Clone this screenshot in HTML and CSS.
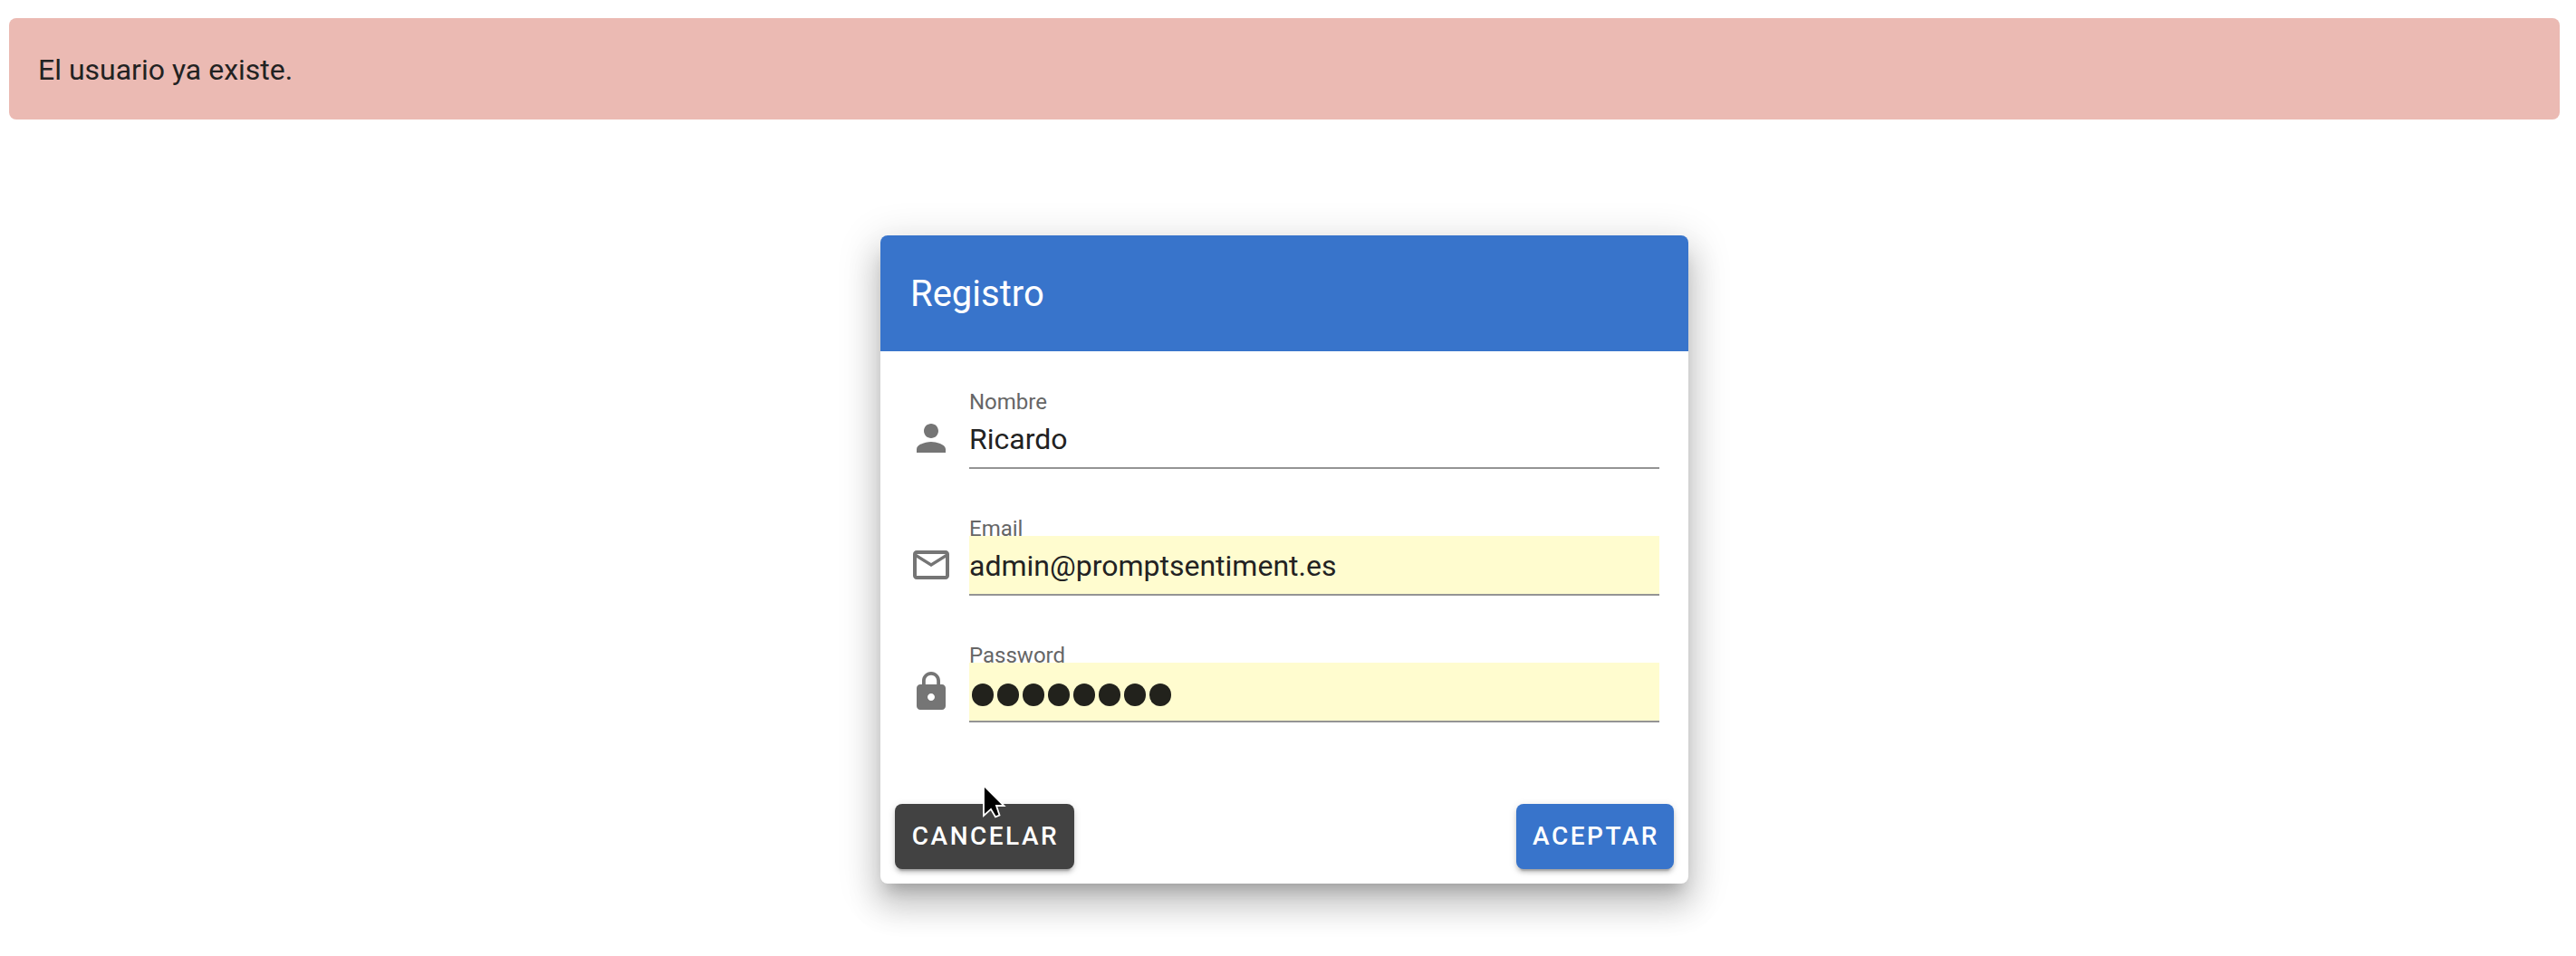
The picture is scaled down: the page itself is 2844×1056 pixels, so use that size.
FILE: index.html
```html
<!DOCTYPE html>
<html lang="es">
<head>
<meta charset="utf-8">
<title>Registro</title>
<link rel="stylesheet" href="styles.css">
</head>
<body>
<main class="page">
  <div class="alert" role="alert">El usuario ya existe.</div>
  <form class="card">
    <header class="toolbar">Registro</header>
    <div class="fields">
      <div class="field">
        <svg class="icon" viewBox="0 0 24 24"><path d="M12 12c2.21 0 4-1.79 4-4s-1.79-4-4-4-4 1.79-4 4 1.790 4 4 4zm0 2c-2.670 0-8 1.340-8 4v2h16v-2c0-2.660-5.330-4-8-4z"/></svg>
        <div class="control">
          <label class="label" for="name">Nombre</label>
          <input class="input" id="name" type="text" value="Ricardo">
        </div>
      </div>
      <div class="field">
        <svg class="icon" viewBox="0 0 24 24"><path d="M20 4H4c-1.100 0-2 .9-2 2v12c0 1.100.9 2 2 2h16c1.100 0 2-.9 2-2V6c0-1.100-.9-2-2-2zm0 14H4V8l8 5 8-5v10zm-8-7L4 6h16l-8 5z"/></svg>
        <div class="control">
          <label class="label" for="email">Email</label>
          <input class="input filled" id="email" type="text" value="admin@promptsentiment.es">
        </div>
      </div>
      <div class="field">
        <svg class="icon" viewBox="0 0 24 24"><path d="M18 8h-1V6c0-2.760-2.240-5-5-5S7 3.240 7 6v2H6c-1.100 0-2 .9-2 2v10c0 1.100.9 2 2 2h12c1.100 0 2-.9 2-2V10c0-1.100-.9-2-2-2zm-6 9c-1.100 0-2-.9-2-2s.9-2 2-2 2 .9 2 2-.9 2-2 2zm3.100-9H8.900V6c0-1.710 1.390-3.100 3.100-3.100s3.100 1.390 3.100 3.100v2z"/></svg>
        <div class="control">
          <span class="label">Password</span>
          <div class="input filled dots" role="textbox" aria-label="Password">
            <i class="dot"></i><i class="dot"></i><i class="dot"></i><i class="dot"></i><i class="dot"></i><i class="dot"></i><i class="dot"></i><i class="dot"></i>
          </div>
        </div>
      </div>
    </div>
    <footer class="actions">
      <button class="button dark" type="button">CANCELAR</button>
      <button class="button primary" type="button">ACEPTAR</button>
      <svg class="cursor" viewBox="0 0 28 42"><path d="M1 2.500L23.500 25h-8.500l3.500 10.500-4.500 1.800-5-8.500-8 7.200z" fill="#000" stroke="#fff" stroke-width="1.800"/></svg>
    </footer>
  </form>
</main>
</body>
</html>
```
FILE: styles.css
```css
* { box-sizing: border-box; }
body {
  margin: 0;
  background: #fff;
  color: #222;
  font: 32px/48px Roboto, sans-serif;
}
.page {
  height: 1056px;
  padding: 20px 18px 0 10px;
  overflow: hidden;
}
.alert {
  height: 112px;
  padding: 33px 32px 31px;
  border-radius: 8px;
  background: #ebbab3;
}
.card {
  width: 892px;
  height: 716px;
  margin: 128px auto 0;
  border-radius: 8px;
  background: #fff;
  display: flex;
  flex-direction: column;
  box-shadow: 0 14px 16px -8px rgba(0,0,0,.2), 0 24px 34px 4px rgba(0,0,0,.14), 0 10px 44px 8px rgba(0,0,0,.12);
}
.toolbar {
  height: 128px;
  padding: 1px 32px 0 33px;
  border-radius: 8px 8px 0 0;
  background: #3874cb;
  color: #fff;
  font-size: 40px;
  line-height: 127px;
}
.fields {
  flex: 1;
  padding: 32px 32px 0;
}
.field {
  display: flex;
  height: 140px;
  padding-top: 8px;
  gap: 18px;
}
.icon {
  width: 48px;
  height: 48px;
  margin-top: 32px;
  fill: #757575;
}
.control {
  flex: 1;
  display: flex;
  flex-direction: column;
}
.label {
  height: 24px;
  color: #666;
  font-size: 24px;
  line-height: 32px;
}
.input {
  width: 100%;
  height: 66px;
  padding: 2px 0 0;
  border: 0;
  border-bottom: 2px solid #949494;
  border-radius: 0;
  outline: 0;
  background: transparent;
  color: #222;
  font: inherit;
}
.input.filled {
  position: relative;
  background: #fffccf;
}
.input.dots {
  display: flex;
  align-items: center;
  gap: 3.500px;
  padding: 7px 0 0 2.500px;
}
.dot {
  width: 24.500px;
  height: 24.500px;
  border-radius: 50%;
  background: #22221c;
}
.actions {
  position: relative;
  display: flex;
  justify-content: space-between;
  padding: 16px;
}
.button {
  height: 72px;
  padding: 0 0 0 2px;
  border: 0;
  border-radius: 8px;
  color: #fff;
  font: 500 28px/72px Roboto, sans-serif;
  letter-spacing: 2.500px;
  box-shadow: 0 6px 2px -4px rgba(0,0,0,.2), 0 4px 4px rgba(0,0,0,.14), 0 2px 10px rgba(0,0,0,.12);
}
.dark { width: 198px; background: #424242; }
.primary { width: 174px; background: #3874cb; }
.cursor {
  position: absolute;
  left: 113px;
  top: -7px;
  width: 28px;
  height: 42px;
}
```
